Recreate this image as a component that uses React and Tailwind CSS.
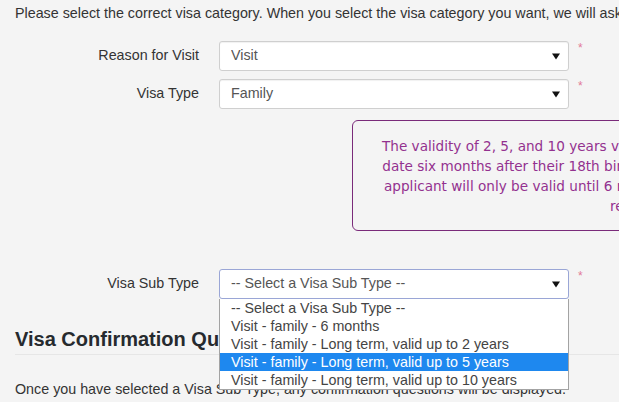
import React from "react";

function Arrow() {
  return (
    <svg width="8" height="7" viewBox="0 0 8 7" className="shrink-0">
      <path d="M0 0.5 L8 0.5 L4 6.5 Z" fill="#111" />
    </svg>
  );
}

function Select({ value, focused }) {
  return (
    <div
      className={
        "w-[350px] h-[30px] bg-white rounded-[3px] border flex items-center pl-[11px] pr-[8px] text-[14.3px] text-[#555] " +
        (focused ? "border-[#9aa6d6]" : "border-[#cfcfcf] shadow-[inset_0_1px_1px_rgba(0,0,0,0.06)]")
      }
    >
      <span className="flex-1 truncate">{value}</span>
      <Arrow />
    </div>
  );
}

function Row({ label, value, focused, children }) {
  return (
    <div className="relative flex items-start">
      <div className="w-[184px] h-[30px] flex items-center justify-end text-[14.3px] text-[#333]">{label}</div>
      <div className="ml-[20px] relative">
        <Select value={value} focused={focused} />
        {children}
      </div>
      <div className="ml-[9px] mt-[1px] text-[12px] leading-[12px] text-[#e27a98]">*</div>
    </div>
  );
}

const options = [
  "-- Select a Visa Sub Type --",
  "Visit - family - 6 months",
  "Visit - family - Long term, valid up to 2 years",
  "Visit - family - Long term, valid up to 5 years",
  "Visit - family - Long term, valid up to 10 years",
];

export default function App() {
  return (
    <div
      className="w-[619px] h-[402px] overflow-hidden bg-[#f4f4f4] text-[#333]"
      style={{ fontFamily: '"Liberation Sans", Arial, sans-serif' }}
    >
      <div className="pl-[15px] pt-[3px]">
        <p className="text-[14.3px] leading-[20px] whitespace-nowrap text-[#333]">
          Please select the correct visa category. When you select the visa category you want, we will ask you a few questions.
        </p>

        <div className="mt-[18px]">
          <Row label="Reason for Visit" value="Visit" />
        </div>
        <div className="mt-[8px]">
          <Row label="Visa Type" value="Family" />
        </div>

        <div className="mt-[11px] ml-[337px] w-max h-[111px] border border-[#7a2b7a] rounded-[6px] pt-[15px] px-[29px]">
          <div
            className="text-[13.6px] leading-[20px] text-[#93318f] text-center whitespace-nowrap"
            style={{ fontFamily: '"DejaVu Sans", Verdana, sans-serif' }}
          >
            <div>The validity of 2, 5, and 10 years visas issued to minor applicants will be up to the</div>
            <div>date six months after their 18th birthday. For example, a 10 years visa for a minor</div>
            <div>applicant will only be valid until 6 months after the applicant turns 18, although it</div>
            <div>reads 10 years.</div>
          </div>
        </div>

        <div className="mt-[38px]">
          <Row label="Visa Sub Type" value="-- Select a Visa Sub Type --" focused>
            <div className="absolute left-0 top-[30px] w-[350px] bg-white border border-[#a3a3a3] border-t-0 z-10 text-[14.3px] text-[#444]">
              {options.map((o, i) => (
                <div
                  key={o}
                  className={
                    "h-[18px] leading-[18px] pl-[11px] whitespace-nowrap " +
                    (i === 3 ? "bg-[#1e88ef] text-white" : "")
                  }
                >
                  {o}
                </div>
              ))}
            </div>
          </Row>
        </div>

        <div className="mt-[28px] pb-[3px] border-b border-[#e6e6e6] mr-[-15px]">
          <h2 className="text-[20px] leading-[24px] font-bold text-[#262a2e]">Visa Confirmation Questions</h2>
        </div>

        <p className="mt-[24px] text-[14.3px] leading-[20px] text-[#333] whitespace-nowrap">
          Once you have selected a Visa Sub Type, any confirmation questions will be displayed.
        </p>
      </div>
    </div>
  );
}
